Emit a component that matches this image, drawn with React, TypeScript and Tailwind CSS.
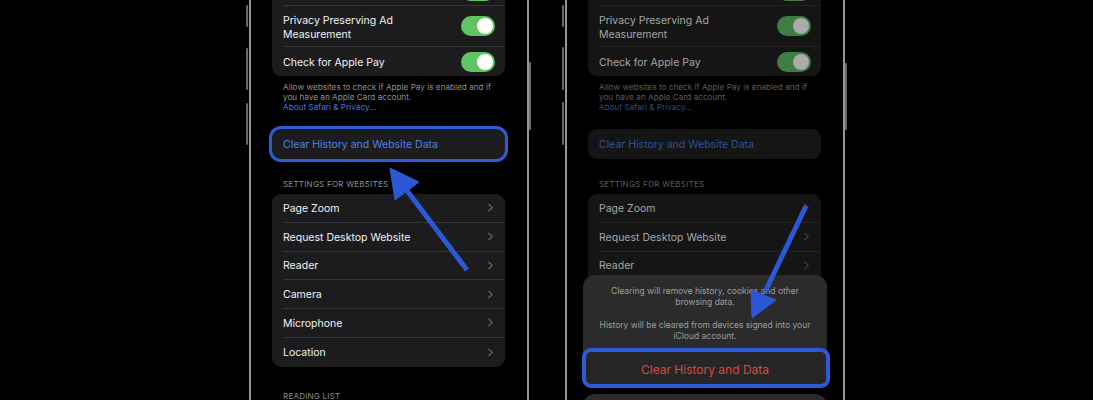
import React from "react";

type Tone = {
  text: string;
  card: string;
  sep: string;
  foot: string;
  link: string;
  action: string;
  head: string;
  chev: string;
  track: string;
  knob: string;
};

const NORMAL: Tone = {
  text: "text-[#f2f2f2]",
  card: "bg-[#1c1c1e]",
  sep: "border-[#343436]",
  foot: "text-[#8e8e93]",
  link: "text-[#3d7be6]",
  action: "text-[#4f80e2]",
  head: "text-[#8e8e93]",
  chev: "text-[#5f5f63]",
  track: "bg-[#5fc462]",
  knob: "bg-white",
};

const DIM: Tone = {
  text: "text-[#a6a6a6]",
  card: "bg-[#151515]",
  sep: "border-[#242424]",
  foot: "text-[#5c5c5c]",
  link: "text-[#2c4b8c]",
  action: "text-[#2f5099]",
  head: "text-[#5c5c5c]",
  chev: "text-[#3c3c3c]",
  track: "bg-[#3f7d41]",
  knob: "bg-[#ababab]",
};

function Toggle({ t }: { t: Tone }) {
  return (
    <span className={`relative block h-[20px] w-[34px] shrink-0 rounded-full ${t.track}`}>
      <span className={`absolute right-[2px] top-[2px] h-[16px] w-[16px] rounded-full ${t.knob}`} />
    </span>
  );
}

function Chevron({ t }: { t: Tone }) {
  return (
    <svg viewBox="0 0 6 10" className={`h-[9px] w-[5px] ${t.chev}`} fill="none" stroke="currentColor" strokeWidth="1.6" strokeLinecap="round" strokeLinejoin="round">
      <path d="M1 1l4 4-4 4" />
    </svg>
  );
}

function Row({ t, h, last, children }: { t: Tone; h: string; last?: boolean; children: React.ReactNode }) {
  return (
    <div className="pl-[11px]">
      <div className={`flex items-center justify-between ${h} ${last ? "" : `border-b ${t.sep}`}`}>{children}</div>
    </div>
  );
}

const SITES = ["Page Zoom", "Request Desktop Website", "Reader", "Camera", "Microphone", "Location"];

// covered: rows hidden behind the action sheet on the dimmed screen
function Settings({ t, covered = 0 }: { t: Tone; covered?: number }) {
  return (
    <div className="mt-[-23px] pl-[21px] pr-[22px] text-[10.5px] leading-[14px]">
      <div className={`overflow-hidden rounded-[9px] ${t.card}`}>
        <Row t={t} h="h-[29px]">
          <span />
          <span className="pr-[10px]"><Toggle t={t} /></span>
        </Row>
        <Row t={t} h="h-[41px]">
          <span className={`pt-[3px] ${t.text}`}>Privacy Preserving Ad<br />Measurement</span>
          <span className="pr-[10px]"><Toggle t={t} /></span>
        </Row>
        <Row t={t} h="h-[29px]" last>
          <span className={`pt-[2px] ${t.text}`}>Check for Apple Pay</span>
          <span className="pr-[10px]"><Toggle t={t} /></span>
        </Row>
      </div>

      <p className={`pl-[11px] pt-[6px] text-[8.2px] leading-[10px] ${t.foot}`}>
        Allow websites to check if Apple Pay is enabled and if<br />
        you have an Apple Card account.<br />
        <span className={t.link}>About Safari &amp; Privacy…</span>
      </p>

      <div className={`mt-[17px] flex h-[30px] items-center rounded-[9px] pl-[11px] pt-[1px] ${t.card} ${t === NORMAL ? "ring-[3px] ring-[#2d5bd6]" : ""}`}>
        <span className={t.action}>Clear History and Website Data</span>
      </div>

      <p className={`mt-[20px] pl-[11px] text-[8px] uppercase leading-[10px] tracking-[0.03em] ${t.head}`}>Settings for Websites</p>

      <div className={`mt-[5px] overflow-hidden rounded-[9px] ${t.card}`}>
        {SITES.map((s, i) => {
          const hidden = i >= SITES.length - covered;
          return (
            <Row key={s} t={t} h="h-[28.75px]" last={i === SITES.length - 1}>
              <span className={`pt-[2px] ${t.text}`}>{hidden ? "" : s}</span>
              <span className="pr-[12px]">{!hidden && <Chevron t={t} />}</span>
            </Row>
          );
        })}
      </div>

      {covered === 0 && (
        <p className={`mt-[24px] pl-[11px] text-[8px] uppercase leading-[10px] tracking-[0.03em] ${t.head}`}>Reading List</p>
      )}
    </div>
  );
}

function Phone({ children, left, right }: { children: React.ReactNode; left: [number, number][]; right: [number, number] }) {
  return (
    <div className="relative h-[400px] w-[280px] shrink-0 border-x-2 border-[#959595] bg-black">
      {left.map(([top, h]) => (
        <span key={top} className="absolute left-[-5px] w-[2px] rounded-sm bg-[#6a6a6a]" style={{ top, height: h }} />
      ))}
      <span className="absolute right-[-4px] w-[2px] rounded-sm bg-[#6a6a6a]" style={{ top: right[0], height: right[1] }} />
      <div className="h-full overflow-hidden">{children}</div>
    </div>
  );
}

function Sheet() {
  return (
    <>
      <div className="absolute left-[16px] top-[275px] w-[244px] overflow-hidden rounded-[12px] bg-[#2b2b2b]">
        <div className="flex h-[76px] flex-col items-center pt-[11px] text-center text-[8.5px] leading-[11px] text-[#9e9e9e]">
          <p>Clearing will remove history, cookies and other<br />browsing data.</p>
          <p className="mt-[12px]">History will be cleared from devices signed into your<br />iCloud account.</p>
        </div>
        <div className="flex h-[36px] items-center justify-center border-t border-[#3a3a3a] bg-[#262626] pt-[1px] text-[12px] text-[#d24b45]">
          Clear History and Data
        </div>
      </div>
      <div className="absolute left-[15px] top-[348px] h-[40px] w-[248px] rounded-[9px] border-[4px] border-[#2d5bd6]" />
      <div className="absolute left-[16px] top-[394px] h-[40px] w-[244px] rounded-[12px] bg-[#2b2b2b]" />
    </>
  );
}

function Arrows() {
  return (
    <svg className="pointer-events-none absolute inset-0 h-[400px] w-[1093px]" viewBox="0 0 1093 400">
      <g fill="#2b59d6" stroke="#2b59d6">
        <line x1="467" y1="270" x2="405" y2="188" strokeWidth="5" />
        <polygon points="390,168 395,200 419,182" strokeWidth="1" strokeLinejoin="round" />
        <line x1="806" y1="206" x2="765" y2="292" strokeWidth="5" />
        <polygon points="752,318 751,290 776,300" strokeWidth="1" strokeLinejoin="round" />
      </g>
    </svg>
  );
}

export default function App() {
  return (
    <div className="relative flex h-[400px] w-[1093px] gap-[36px] overflow-hidden bg-black pl-[249px] font-['Inter','Liberation_Sans',sans-serif]">
      <Phone left={[[5, 22], [48, 42], [103, 42]]} right={[62, 68]}>
        <Settings t={NORMAL} />
      </Phone>
      <Phone left={[[5, 22], [47, 43], [102, 43]]} right={[63, 67]}>
        <Settings t={DIM} covered={3} />
        <Sheet />
      </Phone>
      <Arrows />
    </div>
  );
}
